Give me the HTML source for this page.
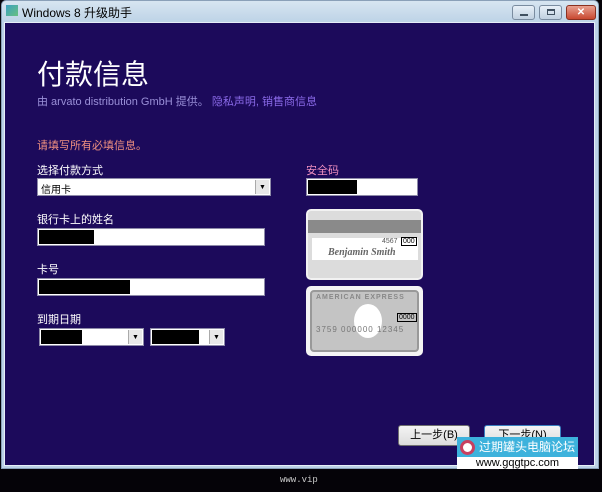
<!DOCTYPE html>
<html><head><meta charset="utf-8"><style>
*{margin:0;padding:0;box-sizing:border-box}
body{width:602px;height:492px;background:#050308;position:relative;overflow:hidden;font-family:"Liberation Sans","Noto Sans CJK SC",sans-serif}
.a{position:absolute}
.win{left:1px;top:0;width:598px;height:469px;background:linear-gradient(#d7e5f1,#bcd2e6 22px);border:1px solid #8aa0b8;border-radius:5px 5px 0 0}
.body{left:4px;top:22px;width:591px;height:444px;background:#1c0a5b;border:1px solid #e6eef8}
.lbl{color:#fff;font-size:11px}
.fld{background:#fff;border:1px solid #8d8aa8}
.blk{background:#000;position:absolute;left:1px;top:1px;bottom:1px}
.dd{position:absolute;right:1px;top:1px;bottom:1px;width:14px;background:#e8e8e8;border-left:1px solid #aaa;font-size:7px;text-align:center;line-height:16px;color:#000}
.btn{background:linear-gradient(#f4f4f4,#dcdcdc);border:1px solid #707070;border-radius:3px;font-size:11px;text-align:center;line-height:19px;color:#000}
</style></head><body>
<div class="a win"></div>
<div class="a" style="left:6px;top:5px;width:12px;height:11px;background:linear-gradient(135deg,#3aa0c0,#68c080);"></div>
<div class="a" style="left:22px;top:4px;font-size:12px;color:#000">Windows 8 升级助手</div>
<div class="a" style="left:512px;top:5px;width:23px;height:15px;border:1px solid #7a8ca0;border-radius:3px;background:linear-gradient(#e8f0f8,#c0d0e0)"><div class="a" style="left:7px;top:8px;width:8px;height:2px;background:#405060"></div></div>
<div class="a" style="left:539px;top:5px;width:23px;height:15px;border:1px solid #7a8ca0;border-radius:3px;background:linear-gradient(#e8f0f8,#c0d0e0)"><div class="a" style="left:7px;top:3px;width:8px;height:6px;border:1px solid #405060;border-top-width:2px"></div></div>
<div class="a" style="left:566px;top:5px;width:30px;height:15px;border:1px solid #8a3020;border-radius:3px;background:linear-gradient(#e8a090,#c84830);color:#fff;font-size:10px;text-align:center;line-height:13px;font-weight:bold">✕</div>
<div class="a body"></div>
<div class="a" style="left:37px;top:53px;font-size:28px;color:#fff;letter-spacing:0">付款信息</div>
<div class="a" style="left:37px;top:93px;font-size:11px;color:#9a90d8">由 arvato distribution GmbH 提供。 <span style="color:#8a6ae8">隐私声明, 销售商信息</span></div>
<div class="a" style="left:37px;top:137px;font-size:11px;color:#f09080">请填写所有必填信息。</div>
<div class="a lbl" style="left:37px;top:162px">选择付款方式</div>
<div class="a fld" style="left:37px;top:178px;width:234px;height:18px;font-size:10px;color:#000;padding:2px 3px">信用卡<div class="dd">▼</div></div>
<div class="a lbl" style="left:37px;top:211px">银行卡上的姓名</div>
<div class="a fld" style="left:37px;top:228px;width:228px;height:18px"><div class="blk" style="width:55px"></div></div>
<div class="a lbl" style="left:37px;top:261px">卡号</div>
<div class="a fld" style="left:37px;top:278px;width:228px;height:18px"><div class="blk" style="width:91px"></div></div>
<div class="a lbl" style="left:37px;top:311px">到期日期</div>
<div class="a fld" style="left:39px;top:328px;width:105px;height:18px"><div class="blk" style="width:41px"></div><div class="dd">▼</div></div>
<div class="a fld" style="left:150px;top:328px;width:75px;height:18px"><div class="blk" style="width:47px"></div><div class="dd">▼</div></div>
<div class="a" style="left:306px;top:162px;font-size:11px;color:#f090c0">安全码</div>
<div class="a fld" style="left:306px;top:178px;width:112px;height:18px"><div class="blk" style="width:49px"></div></div>
<div class="a" style="left:306px;top:209px;width:117px;height:71px;background:#dcdcdc;border:2px solid #f2f2f2;border-radius:5px">
<div class="a" style="left:0;top:9px;width:113px;height:13px;background:#8a8a8a"></div>
<div class="a" style="left:4px;top:27px;width:106px;height:22px;background:#fff"></div>
<div class="a" style="left:74px;top:27px;font-size:7px;color:#555">4567</div>
<div class="a" style="left:93px;top:26px;font-size:7px;border:1px solid #000;padding:0 1px;color:#000">000</div>
<div class="a" style="left:20px;top:36px;font-size:10px;color:#666;font-style:italic;font-family:'Liberation Serif',serif;font-weight:bold">Benjamin Smith</div>
</div>
<div class="a" style="left:306px;top:286px;width:117px;height:70px;background:#f4f4f4;border-radius:5px">
<div class="a" style="left:4px;top:4px;width:109px;height:62px;background:#c4c4c4;border:2px solid #999;border-radius:4px">
<div class="a" style="left:4px;top:2px;font-size:7px;color:#888;font-weight:bold;letter-spacing:1px">AMERICAN EXPRESS</div>
<div class="a" style="left:42px;top:12px;width:28px;height:34px;background:#fff;border-radius:50%"></div>
<div class="a" style="left:85px;top:21px;font-size:7px;border:1px solid #000;padding:0 1px;color:#000">0000</div>
<div class="a" style="left:4px;top:33px;font-size:8px;color:#777;letter-spacing:1px">3759 000000 12345</div>
</div></div>
<div class="a btn" style="left:398px;top:425px;width:72px;height:21px">上一步(B)</div>
<div class="a btn" style="left:484px;top:425px;width:77px;height:21px;border-color:#3a80c0">下一步(N)</div>
<div class="a" style="left:457px;top:437px;width:121px;height:20px;background:#3db2dc;color:#fff;font-size:12px;line-height:20px;padding-left:22px">过期罐头电脑论坛</div>
<div class="a" style="left:460px;top:440px;width:15px;height:15px;border-radius:50%;background:#fff;border:3px solid #c84060"></div>
<div class="a" style="left:457px;top:457px;width:121px;height:12px;background:#fff;color:#000;font-size:11px;line-height:12px;text-align:center">www.gqgtpc.com</div>
<div class="a" style="left:280px;top:475px;font-size:9px;color:#ccc;font-family:'Liberation Mono',monospace">www.vip</div>
</body></html>
